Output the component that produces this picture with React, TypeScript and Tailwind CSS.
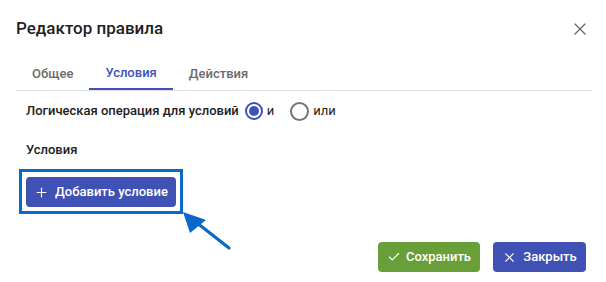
import { Check, Plus, X } from "lucide-react";

const font = { fontFamily: "Roboto, 'Noto Sans', sans-serif" };

function Radio({ checked, label }: { checked?: boolean; label: string }) {
  return (
    <label className="flex items-center gap-[4px]">
      <span
        className={
          checked
            ? "w-[18px] h-[18px] rounded-full border-2 border-[#3f51b5] grid place-items-center"
            : "w-[19px] h-[19px] rounded-full border-2 border-[#757575] grid place-items-center"
        }
      >
        {checked && <span className="w-[10px] h-[10px] rounded-full bg-[#3f51b5]" />}
      </span>
      <span className="text-[13px] text-[#212121]">{label}</span>
    </label>
  );
}

export default function App() {
  return (
    <div className="relative w-[606px] h-[282px] bg-white overflow-hidden" style={font}>
      {/* header */}
      <div className="flex items-center justify-between pl-4 pr-[16px] h-[58px]">
        <h1 className="text-[17px] font-medium text-[#212121]">Редактор правила</h1>
        <X size={20} strokeWidth={1.5} className="text-[#666]" />
      </div>

      {/* tabs */}
      <div className="mx-4 mr-[14px] flex border-b border-[#dee2e6] text-[13px] font-medium">
        <div className="h-[32px] px-[16px] flex items-center text-[#6c6c6c]">Общее</div>
        <div className="h-[32px] px-[16px] flex items-center text-[#3f51b5] border-b-2 border-[#3f51b5] -mb-px">
          Условия
        </div>
        <div className="h-[32px] px-[16px] flex items-center text-[#6c6c6c]">Действия</div>
      </div>

      {/* content */}
      <div className="pl-[26px] pt-[10px]">
        <div className="flex items-center gap-[6px] h-[20px]">
          <span className="text-[13px] font-medium text-[#212121]">Логическая операция для условий</span>
          <Radio checked label="и" />
          <span className="w-[4px]" />
          <Radio label="или" />
        </div>
        <div className="mt-[19px] text-[13px] font-medium text-[#212121] leading-[20px]">Условия</div>
        <div className="mt-[9px] -ml-[7px] inline-block border-[3px] border-[#0a68c9] px-[4px] pt-[5px] pb-[4px]">
          <button className="h-[30px] w-[150px] rounded-[4px] bg-[#3f51b5] text-white text-[13px] font-medium flex items-center justify-center gap-[6px]">
            <Plus size={15} strokeWidth={1.8} />
            Добавить условие
          </button>
        </div>
      </div>

      {/* arrow annotation */}
      <svg className="absolute left-0 top-0" width="606" height="282" viewBox="0 0 606 282">
        <line x1="229" y1="248" x2="192" y2="219" stroke="#0a68c9" strokeWidth="3.2" strokeLinecap="round" />
        <polygon points="183,212 206,220 190,233" fill="#0a68c9" />
      </svg>

      {/* footer */}
      <div className="absolute right-[20px] top-[242px] flex gap-[13px]">
        <button className="h-[30px] w-[102px] rounded-[4px] bg-[#689f38] text-white text-[13px] font-medium flex items-center justify-center gap-[5px]">
          <Check size={14} strokeWidth={2} />
          Сохранить
        </button>
        <button className="h-[30px] w-[93px] rounded-[4px] bg-[#3f51b5] text-white text-[13px] font-medium flex items-center justify-center gap-[6px]">
          <X size={15} strokeWidth={1.8} />
          Закрыть
        </button>
      </div>
    </div>
  );
}
